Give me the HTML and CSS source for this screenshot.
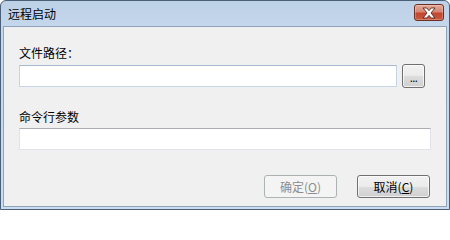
FILE: index.html
```html
<!DOCTYPE html>
<html lang="zh">
<head>
<meta charset="utf-8">
<title>远程启动</title>
<link rel="stylesheet" href="styles.css">
</head>
<body>
<div class="window">
  <div class="titlebar">
    <span class="title">远程启动</span>
    <div class="close">
      <svg width="18" height="12" viewBox="0 0 18 12"><path d="M3 1 L6.8 1 L9 3.6 L11.2 1 L15 1 L11 6 L15 11 L11.2 11 L9 8.4 L6.8 11 L3 11 L7 6 Z" fill="#fff" stroke="#5a2419" stroke-width="0.9" stroke-linejoin="round"/></svg>
    </div>
  </div>
  <div class="client">
    <div class="label first">文件路径：</div>
    <div class="row">
      <div class="field path"></div>
      <div class="btn browse">...</div>
    </div>
    <div class="label second">命令行参数</div>
    <div class="field args"></div>
    <div class="actions">
      <div class="btn action disabled">确定(<u>O</u>)</div>
      <div class="btn action">取消(<u>C</u>)</div>
    </div>
  </div>
</div>
</body>
</html>
```
FILE: styles.css
```css
html, body {
  margin: 0;
  padding: 0;
  background: #ffffff;
}
body {
  font-family: "Noto Sans CJK SC", "Noto Sans", sans-serif;
  font-size: 12px;
  color: #000;
}
.window {
  box-sizing: border-box;
  width: 450px;
  height: 210px;
  border: 1px solid #4b5f78;
  border-radius: 6px 6px 0 0;
  background: linear-gradient(to bottom, #bcd0e6 0px, #c5d7eb 26px, #cbdcee 100%);
  display: flex;
  flex-direction: column;
  padding: 0 2px 2px 2px;
}
.titlebar {
  height: 25px;
  display: flex;
  align-items: flex-start;
  flex-shrink: 0;
}
.title {
  margin-left: 5px;
  margin-top: 5px;
  line-height: 16px;
  color: #000;
}
.close {
  margin-left: auto;
  margin-right: 3px;
  margin-top: 3px;
  width: 30px;
  height: 17px;
  box-sizing: border-box;
  border: 1px solid #6e2d22;
  border-radius: 3px;
  background: linear-gradient(to bottom, #e3a999 0%, #d68774 45%, #c2462f 55%, #c65a3f 100%);
  display: flex;
  align-items: center;
  justify-content: center;
  box-shadow: inset 0 0 0 1px rgba(255,255,255,0.25);
}
.close svg { display: block; }
.client {
  flex: 1;
  border: 1px solid #8fa3ba;
  background: #f0f0f0;
  padding: 18px 16px 0 15px;
  display: flex;
  flex-direction: column;
}
.label {
  height: 16px;
  line-height: 16px;
}
.label.second { margin-top: 21px; }
.row {
  margin-top: 3px;
  display: flex;
  align-items: center;
  gap: 5px;
  height: 24px;
}
.field {
  box-sizing: border-box;
  height: 22px;
  background: #fff;
  border: 1px solid #e2e3ea;
  border-top-color: #abadb3;
}
.field.path {
  width: 378px;
  border-color: #c5d5e6;
  border-top-color: #a7b9cd;
}
.field.args {
  width: 412px;
  margin-top: 3px;
}
.btn {
  box-sizing: border-box;
  border: 1px solid #707070;
  border-radius: 3px;
  background: linear-gradient(to bottom, #f2f2f2 0%, #ebebeb 50%, #dddddd 51%, #cfcfcf 100%);
  box-shadow: inset 0 0 0 1px rgba(255,255,255,0.7);
  display: flex;
  align-items: center;
  justify-content: center;
  color: #000;
}
.browse {
  width: 23px;
  height: 24px;
  font-size: 11px;
  line-height: 1;
  padding-top: 3px;
  letter-spacing: -0.5px;
}
.actions {
  margin-top: 25px;
  display: flex;
  justify-content: flex-end;
  gap: 20px;
}
.action {
  width: 73px;
  height: 23px;
  line-height: 16px;
}
.action u { text-decoration: underline; text-underline-offset: 1px; }
.disabled {
  border-color: #adb2b5;
  background: #f4f4f4;
  color: #8d8d8d;
  box-shadow: none;
}
```
